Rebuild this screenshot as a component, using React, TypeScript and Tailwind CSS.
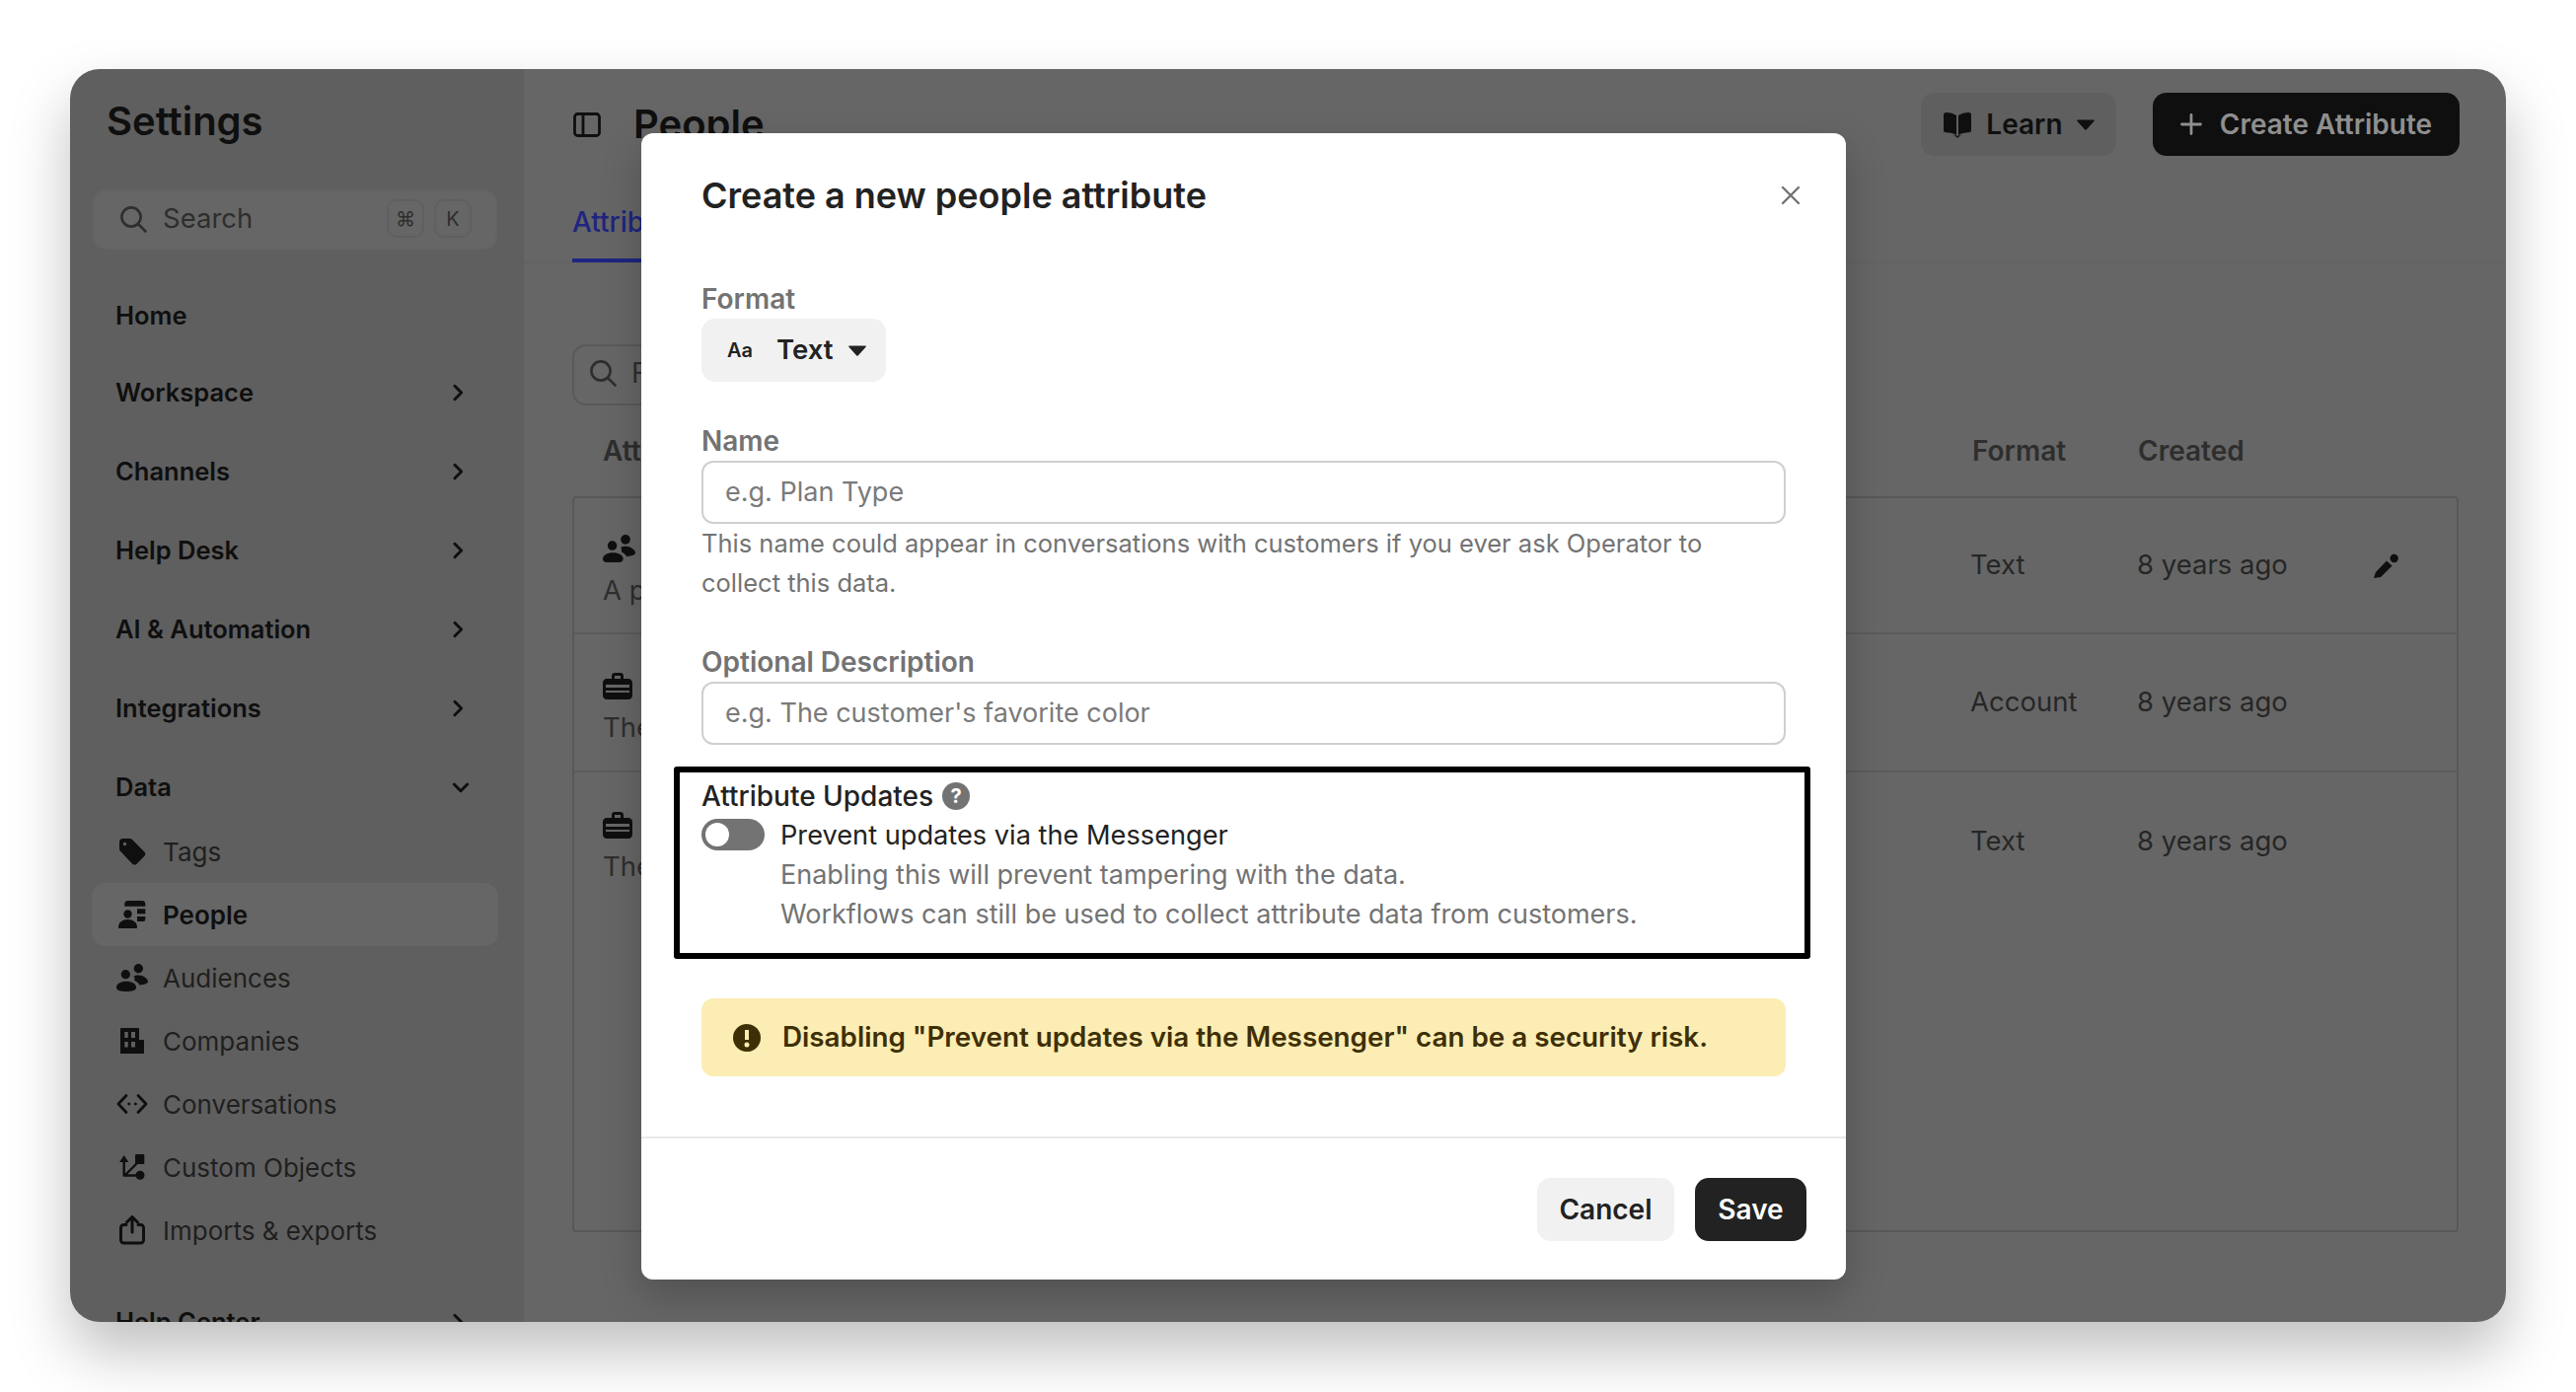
import React from "react";

const ink = "#0f0f0f";

function Chevron({ down }: { down?: boolean }) {
    return (
        <svg width="22" height="22" viewBox="0 0 18 18" fill="none" stroke={ink} strokeWidth="2.4" strokeLinecap="round" strokeLinejoin="round">
            {down ? <path d="M3.5 6.5 9 12l5.5-5.5" /> : <path d="M6.5 3.5 12 9l-5.5 5.5" />}
        </svg>
    );
}

function SearchIcon({ color }: { color: string }) {
    return (
        <svg width="28" height="28" viewBox="0 0 28 28" fill="none" stroke={color} strokeWidth="2.6" strokeLinecap="round">
            <circle cx="12" cy="12" r="9.6" />
            <path d="m19.5 19.5 7 7" />
        </svg>
    );
}

function TagIcon() {
    return (
        <svg width="28" height="28" viewBox="0 0 28 28" fill={ink}>
            <path fillRule="evenodd" d="M1 4.5C1 2.5 2.500 1 4.500 1h7c1 0 1.900.4 2.500 1l12.400 12.600c1.200 1.200 1.200 3 0 4.200l-7.900 7.900c-1.200 1.200-3 1.200-4.200 0L1.900 13.700C1.300 13 1 12.200 1 11.300V4.500Zm5.500 3.800a1.800 1.800 0 1 0 0-3.600 1.800 1.800 0 0 0 0 3.600Z" />
        </svg>
    );
}

function PeopleIcon() {
    return (
        <svg width="28" height="28" viewBox="0 0 28 28" fill={ink}>
            <path d="M6.300 3c0-1.700 1.300-3 3-3h15c1.700 0 3 1.300 3 3v2.700h-21V3Z" />
            <circle cx="9.500" cy="13.500" r="4.200" />
            <path d="M0 27c0-4.800 4-8 9.500-8s9.500 3.200 9.500 8c0 .6-.4 1-1 1H1c-.6 0-1-.4-1-1Z" />
            <rect x="19" y="8.300" width="8.300" height="5" />
            <path d="M19 16h8.300v3c0 1.200-.8 2-2 2H19v-5Z" />
        </svg>
    );
}

function AudienceIcon({ size = 32 }: { size?: number }) {
    return (
        <svg width={size} height={size * 0.875} viewBox="0 0 32 28" fill={ink}>
            <circle cx="9.300" cy="10.700" r="4.600" />
            <circle cx="22.300" cy="4.700" r="4.700" />
            <path d="M0 24c0-3.800 4.200-6.200 10-6.200S20 20.200 20 24c0 3-4.500 4-10 4S0 27 0 24Z" />
            <path d="M17.500 12.800c1.300-.8 3-1.300 4.800-1.300 5 0 9.700 3.500 9.700 6.500 0 1.500-3 3-8.500 3.500-1-2-3-3.600-5.300-4.500.7-1.500.4-3-.7-4.200Z" />
        </svg>
    );
}

function BuildingIcon() {
    return (
        <svg width="24" height="26" viewBox="0 0 24 26" fill={ink}>
            <path fillRule="evenodd" d="M0 1c0-.6.400-1 1-1h17c.6 0 1 .4 1 1v11h4c.6 0 1 .4 1 1v13H0V1Zm4.300 3v6h3.400V4H4.300Zm6.700 0v6h4V4h-4Zm-6.700 10v5.500h3.400V14H4.300Zm6.700 0v5.500h4V14h-4Z" />
        </svg>
    );
}

function ConversationIcon() {
    return (
        <svg width="32" height="22" viewBox="0 0 32 22" fill="none" stroke={ink} strokeWidth="2.800" strokeLinecap="round" strokeLinejoin="round">
            <path d="M10 2.500 2 11l8 8.500" />
            <path d="m22 2.500 8 8.500-8 8.500" />
            <circle cx="12.700" cy="11" r="1" fill={ink} strokeWidth="1" />
            <circle cx="19.300" cy="11" r="1" fill={ink} strokeWidth="1" />
        </svg>
    );
}

function ObjectsIcon() {
    return (
        <svg width="26" height="26" viewBox="0 0 26 26" fill="none" stroke={ink} strokeWidth="2.400" strokeLinecap="round" strokeLinejoin="round">
            <path d="M4.700 7v14.500H17M6 21 17 10" />
            <path d="M4.700 1 9.300 8H.1l4.600-7Z" fill={ink} stroke="none" />
            <rect x="16" y="0" width="9.300" height="10" rx="1" fill={ink} stroke="none" />
            <circle cx="21" cy="21.300" r="4.500" fill={ink} stroke="none" />
        </svg>
    );
}

function ExportIcon() {
    return (
        <svg width="26" height="30" viewBox="0 0 26 30" fill="none" stroke={ink} strokeWidth="3" strokeLinecap="round" strokeLinejoin="round">
            <path d="M7 9.500H4.500c-1.600 0-3 1.400-3 3V25c0 1.600 1.400 3 3 3h17c1.600 0 3-1.400 3-3V12.500c0-1.600-1.400-3-3-3H19" />
            <path d="M13 17V2M7.500 7 13 1.500 18.500 7" />
        </svg>
    );
}

function Briefcase() {
    return (
        <svg width="30" height="27" viewBox="0 0 30 27" fill={ink}>
            <path fillRule="evenodd" d="M9 6V3c0-1.700 1.300-3 3-3h6c1.700 0 3 1.300 3 3v3h5c2.200 0 4 1.800 4 4v13c0 2.200-1.800 4-4 4H4c-2.200 0-4-1.800-4-4V10c0-2.200 1.800-4 4-4h5Zm3 0h6V3h-6v3ZM3 12v3h24v-3H3Zm0 6v2h24v-2H3Z" />
        </svg>
    );
}

function NavItem({ label, open, arrow, mt }: { label: string; open?: boolean; arrow?: boolean; mt?: string }) {
    return (
        <div className={`flex h-[80px] shrink-0 items-center justify-between pl-[46px] pr-[56px] text-[25.5px] font-semibold text-[#0f0f0f] ${mt ?? ""}`}>
            <span>{label}</span>
            {arrow && <Chevron down={open} />}
        </div>
    );
}

function SubItem({ label, icon, active }: { label: string; icon: React.ReactNode; active?: boolean }) {
    return (
        <div className={`ml-[22px] flex h-[64px] w-[412px] shrink-0 items-center rounded-[14px] text-[26px] ${active ? "bg-[#666666] font-semibold text-[#0f0f0f]" : "text-[#1f1f1f]"}`}>
            <span className="flex w-[72px] shrink-0 justify-center pl-[10px]">{icon}</span>
            <span>{label}</span>
        </div>
    );
}

function TableRow({ icon, name, desc, format, pencil, height, last }: { icon: React.ReactNode; name: string; desc: string; format: string; pencil?: boolean; height: string; last?: boolean }) {
    return (
        <div className={`flex shrink-0 items-center text-[27.5px] ${height} ${last ? "" : "border-b-2 border-[#5c5c5c]"}`}>
            <div className="flex-1 pl-[29px] pt-[8px]">
                <div className="flex h-[40px] items-center gap-3 font-medium text-[#0f0f0f]">
                    {icon}
                    <span>{name}</span>
                </div>
                <div className="mt-[2px] h-[40px] leading-[40px] text-[#2e2e2e]">{desc}</div>
            </div>
            <div className="w-[168px] text-[#262626]">{format}</div>
            <div className="w-[225px] pl-[1px] text-[#262626]">8 years ago</div>
            <div className="flex w-[54px] justify-center">
                {pencil && (
                    <svg width="28" height="28" viewBox="0 0 28 28" fill={ink}>
                        <path d="M3 27 5 21 16 9.500l5.700 5L10 26Z" />
                        <circle cx="23.700" cy="7" r="4.200" />
                    </svg>
                )}
            </div>
            <div className="w-[46px]" />
        </div>
    );
}

function Sidebar() {
    return (
        <aside className="flex w-[460px] shrink-0 flex-col bg-[#5f5f5f]">
            <div className="h-[122px] shrink-0 pl-[37px] pt-[30px] text-[40px] font-semibold leading-[46px] text-[#0f0f0f]">Settings</div>
            <div className="ml-[23px] flex h-[61px] w-[410px] shrink-0 items-center rounded-[14px] border-2 border-[#646464] bg-[#666666] pb-[2px] pl-[25px] text-[27.5px] text-[#2e2e2e]">
                <SearchIcon color="#2e2e2e" />
                <span className="ml-[16px] flex-1">Search</span>
                <span className="flex h-[39px] w-[38px] items-center justify-center rounded-[10px] border-2 border-[#606060] text-[20px]">⌘</span>
                <span className="ml-[10px] mr-[24px] flex h-[39px] w-[38px] items-center justify-center rounded-[10px] border-2 border-[#606060] text-[20px]">K</span>
            </div>
            <div className="mt-[29px] flex h-[76px] shrink-0 items-center pl-[46px] text-[25.5px] font-semibold text-[#0f0f0f]">Home</div>
            <NavItem label="Workspace" arrow />
            <NavItem label="Channels" arrow />
            <NavItem label="Help Desk" arrow />
            <NavItem label="AI & Automation" arrow />
            <NavItem label="Integrations" arrow />
            <div className="flex h-[73px] shrink-0 items-center justify-between pl-[46px] pr-[53px] pt-[7px] text-[25.5px] font-semibold text-[#0f0f0f]">
                <span>Data</span>
                <Chevron down />
            </div>
            <SubItem label="Tags" icon={<TagIcon />} />
            <SubItem label="People" icon={<PeopleIcon />} active />
            <SubItem label="Audiences" icon={<AudienceIcon />} />
            <SubItem label="Companies" icon={<BuildingIcon />} />
            <SubItem label="Conversations" icon={<ConversationIcon />} />
            <SubItem label="Custom Objects" icon={<ObjectsIcon />} />
            <SubItem label="Imports & exports" icon={<ExportIcon />} />
            <NavItem label="Help Center" arrow mt="mt-[21px]" />
        </aside>
    );
}

function Main() {
    return (
        <main className="flex min-w-0 flex-1 flex-col bg-[#666666]">
            <header className="h-[197px] shrink-0 border-b-2 border-[#626262] pl-[49px] pr-[47px]">
                <div className="flex h-[88px] items-end justify-between">
                    <div className="flex h-[64px] items-center">
                        <svg width="28" height="25" viewBox="0 0 28 25" fill="none" stroke={ink} strokeWidth="2.800" className="ml-[1px]">
                            <rect x="1.500" y="1.500" width="25" height="22" rx="3" />
                            <path d="M10 1.500v22" />
                        </svg>
                        <h1 className="ml-[33px] text-[40px] font-semibold text-[#0f0f0f]">People</h1>
                    </div>
                    <div className="flex items-center gap-[37px] text-[28px] font-semibold">
                        <button className="flex h-[64px] w-[198px] items-center justify-center gap-[14px] rounded-[14px] bg-[#5f5f5f] text-[#0f0f0f]">
                            <svg width="30" height="27" viewBox="0 0 30 27" fill={ink}>
                                <path d="M1 3.500C1 2 2 1 3.500 1c4 0 7.500 1 10.500 3v20c-3-1.800-6.500-2.700-10.500-2.700C2 21.300 1 20.300 1 19V3.500Zm28 0C29 2 28 1 26.500 1c-4 0-7.500 1-10.500 3v20c3-1.800 6.500-2.700 10.500-2.700 1.500 0 2.500-1 2.500-2.300V3.500ZM11 23.800l4 3 4-3-4 1-4-1Z" />
                            </svg>
                            <span>Learn</span>
                            <svg width="18" height="11" viewBox="0 0 18 11" fill={ink}>
                                <path d="M1 .5h16c.7 0 1 .7.6 1.200L9.700 10.400c-.4.400-1 .4-1.400 0L.4 1.700C0 1.200.3.500 1 .5Z" />
                            </svg>
                        </button>
                        <button className="flex h-[64px] w-[311px] items-center justify-center gap-[18px] rounded-[14px] bg-[#0f0f0f] text-[#8f8f8f]">
                            <svg width="22" height="22" viewBox="0 0 22 22" fill="none" stroke="#8f8f8f" strokeWidth="2.800" strokeLinecap="round">
                                <path d="M11 1.500v19M1.500 11h19" />
                            </svg>
                            <span>Create Attribute</span>
                        </button>
                    </div>
                </div>
                <div className="mt-[50px] flex">
                    <span className="h-[58px] w-[150px] border-b-[4px] border-[#1e2580] text-[28px] font-medium leading-[34px] text-[#1e2580]">Attributes</span>
                </div>
            </header>
            <div className="flex flex-1 flex-col pl-[49px] pr-[48px] pt-[82px]">
                <div className="flex h-[62px] w-[560px] shrink-0 items-center rounded-[14px] border-2 border-[#5a5a5a] pb-[4px] pl-[15px] text-[28px] text-[#2e2e2e]">
                    <SearchIcon color="#2e2e2e" />
                    <span className="ml-[15px]">Filter attributes</span>
                </div>
                <div className="flex h-[92px] shrink-0 items-center text-[28px] font-semibold text-[#2e2e2e]">
                    <div className="flex-1 pl-[31px]">Attribute</div>
                    <div className="w-[168px]">Format</div>
                    <div className="w-[325px]">Created</div>
                </div>
                <div className="flex h-[746px] shrink-0 flex-col overflow-hidden rounded-[4px] border-2 border-[#585858]">
                    <TableRow icon={<AudienceIcon size={33} />} name="Name" desc="A person's full name" format="Text" pencil height="h-[138px]" />
                    <TableRow icon={<Briefcase />} name="Company name" desc="The name of the company" format="Account" height="h-[140px]" />
                    <TableRow icon={<Briefcase />} name="Company plan" desc="The plan of the company" format="Text" height="h-[140px]" last />
                </div>
            </div>
        </main>
    );
}

function Field({ label, placeholder }: { label: string; placeholder: string }) {
    return (
        <>
            <label className="mt-[40px] block text-[28px] font-semibold leading-[40px] text-[#737373]">{label}</label>
            <div className="flex h-[64px] items-center rounded-[12px] border-2 border-[#cfcfcf] pl-[22px] text-[27px] text-[#7a7a7a]">{placeholder}</div>
        </>
    );
}

function Modal() {
    return (
        <div className="absolute left-[579px] top-[65px] flex h-[1162px] w-[1221px] flex-col rounded-[12px] bg-white font-[Inter,sans-serif] shadow-[0_16px_40px_rgba(0,0,0,0.22)]">
            <div className="flex-1 pl-[61px] pr-[61px] pt-[40px]">
                <div className="flex items-center justify-between">
                    <h2 className="text-[36px] font-semibold leading-[46px] text-[#222222]">Create a new people attribute</h2>
                    <svg width="20" height="20" viewBox="0 0 20 20" fill="none" stroke="#737373" strokeWidth="2.400" strokeLinecap="round" className="-mr-[15px]">
                        <path d="m2 2 16 16M18 2 2 18" />
                    </svg>
                </div>
                <label className="mt-[62px] block text-[28px] font-semibold leading-[40px] text-[#737373]">Format</label>
                <button className="flex h-[64px] w-[187px] items-center rounded-[14px] bg-[#f1f1f1] pl-[26px] text-[27.5px] font-semibold text-[#222222]">
                    <span className="w-[50px] text-left text-[20px] font-semibold">Aa</span>
                    <span>Text</span>
                    <svg width="18" height="11" viewBox="0 0 18 11" fill="#222222" className="ml-[16px]">
                        <path d="M1 .5h16c.7 0 1 .7.6 1.200L9.700 10.400c-.4.400-1 .4-1.400 0L.4 1.700C0 1.200.3.500 1 .5Z" />
                    </svg>
                </button>
                <Field label="Name" placeholder="e.g. Plan Type" />
                <p className="text-[25.5px] leading-[40px] text-[#737373]">
                    This name could appear in conversations with customers if you ever ask Operator to
                    <br />
                    collect this data.
                </p>
                <Field label="Optional Description" placeholder="e.g. The customer's favorite color" />
                <div className="-ml-[28px] -mr-[25px] mt-[22px] h-[195px] rounded-[3px] border-[6px] border-black pl-[22px] pt-[4px]">
                    <div className="flex h-[40px] items-center gap-[9px] text-[28px] font-medium text-[#222222]">
                        <span>Attribute Updates</span>
                        <span className="flex h-[28px] w-[28px] items-center justify-center rounded-full bg-[#737373] text-[20px] font-bold text-white">?</span>
                    </div>
                    <div className="flex">
                        <div className="mt-[3px] flex h-[32px] w-[64px] shrink-0 items-center rounded-full bg-[#737373] pl-[4px]">
                            <span className="h-[24px] w-[24px] rounded-full bg-white" />
                        </div>
                        <div className="ml-[16px] text-[27px] leading-[40px]">
                            <div className="text-[27.2px] text-[#222222]">Prevent updates via the Messenger</div>
                            <div className="text-[#737373]">Enabling this will prevent tampering with the data.</div>
                            <div className="text-[#737373]">Workflows can still be used to collect attribute data from customers.</div>
                        </div>
                    </div>
                </div>
                <div className="mt-[40px] flex h-[79px] items-center rounded-[12px] bg-[#fbedb3] pl-[32px] text-[27.8px] font-semibold text-[#3f2f06]">
                    <svg width="28" height="28" viewBox="0 0 28 28" fill="#3f2f06" className="mr-[22px]">
                        <path fillRule="evenodd" d="M14 0a14 14 0 1 1 0 28 14 14 0 0 1 0-28Zm-2 6v10h4V6h-4Zm2 12.500a2.500 2.500 0 1 0 0 5 2.500 2.500 0 0 0 0-5Z" />
                    </svg>
                    <span>Disabling "Prevent updates via the Messenger" can be a security risk.</span>
                </div>
            </div>
            <div className="flex h-[145px] shrink-0 items-start justify-end gap-[21px] border-t-2 border-[#e8e8e8] pr-[40px] pt-[40px] text-[28px] font-semibold">
                <button className="h-[64px] w-[139px] rounded-[14px] bg-[#f1f1f1] text-[#222222]">Cancel</button>
                <button className="h-[64px] w-[113px] rounded-[14px] bg-[#222222] text-white">Save</button>
            </div>
        </div>
    );
}

export default function App() {
    return (
        <div className="h-[1411px] w-[2611px] overflow-hidden bg-white pl-[71px] pt-[70px] font-[Inter,sans-serif]">
            <div className="relative flex h-[1270px] w-[2469px] overflow-hidden rounded-[30px] shadow-[0_30px_60px_rgba(0,0,0,0.25)]">
                <Sidebar />
                <Main />
                <Modal />
            </div>
        </div>
    );
}
